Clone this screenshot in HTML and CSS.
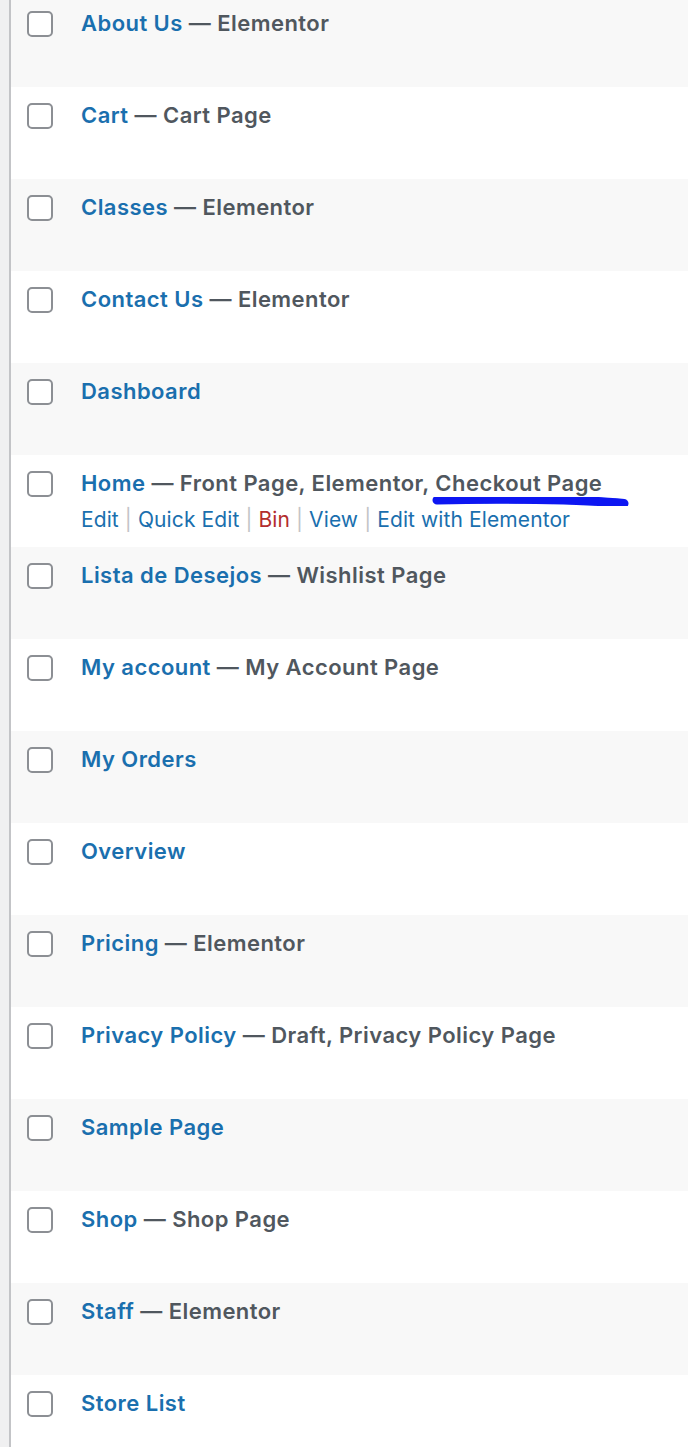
FILE: index.html
```html
<!DOCTYPE html>
<html>
<head>
<meta charset="utf-8">
<link rel="stylesheet" href="styles.css">
</head>
<body>
<div class="screen">
  <div class="gutter"></div>
  <div class="table">
    <div class="row alt"><div class="cb"><span class="box"></span></div><div class="title"><div class="line"><a class="name">About Us</a><span class="state"> — Elementor</span></div></div></div>
    <div class="row"><div class="cb"><span class="box"></span></div><div class="title"><div class="line"><a class="name">Cart</a><span class="state"> — Cart Page</span></div></div></div>
    <div class="row alt"><div class="cb"><span class="box"></span></div><div class="title"><div class="line"><a class="name">Classes</a><span class="state"> — Elementor</span></div></div></div>
    <div class="row"><div class="cb"><span class="box"></span></div><div class="title"><div class="line"><a class="name">Contact Us</a><span class="state"> — Elementor</span></div></div></div>
    <div class="row alt"><div class="cb"><span class="box"></span></div><div class="title"><div class="line"><a class="name">Dashboard</a></div></div></div>
    <div class="row"><div class="cb"><span class="box"></span></div><div class="title"><div class="line"><a class="name">Home</a><span class="state"> — Front Page, Elementor, <span class="mark">Checkout Page<svg class="scribble" width="200" height="20" viewBox="0 0 200 20"><defs><filter id="soft" x="-5%" y="-50%" width="110%" height="200%"><feGaussianBlur stdDeviation="0.7"/></filter></defs><path d="M6 8 C 40 7, 75 7, 105 7.5 S 165 8.5, 193 11.5" fill="none" stroke="#0814f2" stroke-width="9" stroke-linecap="round" filter="url(#soft)"/></svg></span></span></div>
      <div class="actions"><a>Edit</a><span class="sep">|</span><a>Quick Edit</a><span class="sep">|</span><a class="bin">Bin</a><span class="sep">|</span><a>View</a><span class="sep">|</span><a>Edit with Elementor</a></div></div></div>
    <div class="row alt"><div class="cb"><span class="box"></span></div><div class="title"><div class="line"><a class="name">Lista de Desejos</a><span class="state"> — Wishlist Page</span></div></div></div>
    <div class="row"><div class="cb"><span class="box"></span></div><div class="title"><div class="line"><a class="name">My account</a><span class="state"> — My Account Page</span></div></div></div>
    <div class="row alt"><div class="cb"><span class="box"></span></div><div class="title"><div class="line"><a class="name">My Orders</a></div></div></div>
    <div class="row"><div class="cb"><span class="box"></span></div><div class="title"><div class="line"><a class="name">Overview</a></div></div></div>
    <div class="row alt"><div class="cb"><span class="box"></span></div><div class="title"><div class="line"><a class="name">Pricing</a><span class="state"> — Elementor</span></div></div></div>
    <div class="row"><div class="cb"><span class="box"></span></div><div class="title"><div class="line"><a class="name">Privacy Policy</a><span class="state"> — Draft, Privacy Policy Page</span></div></div></div>
    <div class="row alt"><div class="cb"><span class="box"></span></div><div class="title"><div class="line"><a class="name">Sample Page</a></div></div></div>
    <div class="row"><div class="cb"><span class="box"></span></div><div class="title"><div class="line"><a class="name">Shop</a><span class="state"> — Shop Page</span></div></div></div>
    <div class="row alt"><div class="cb"><span class="box"></span></div><div class="title"><div class="line"><a class="name">Staff</a><span class="state"> — Elementor</span></div></div></div>
    <div class="row"><div class="cb"><span class="box"></span></div><div class="title"><div class="line"><a class="name">Store List</a></div></div></div>
  </div>
</div>
</body>
</html>
```
FILE: styles.css
```css
html, body {
  margin: 0;
  padding: 0;
  background: #ffffff;
}
body {
  font-family: Inter, "Noto Sans", "Liberation Sans", sans-serif;
  overflow: hidden;
}
.screen {
  display: flex;
  height: 1447px;
  overflow: hidden;
}
.gutter {
  width: 9px;
  flex: none;
  background: #f0f0f1;
  border-right: 2px solid #c3c4c7;
}
.table {
  flex: 1;
  margin-top: -5px;
}
.row {
  display: flex;
  height: 92px;
  box-sizing: border-box;
  background: #ffffff;
}
.row.alt {
  background: #f8f8f8;
}
.cb {
  width: 70px;
  flex: none;
  padding-left: 16px;
  padding-top: 16px;
  box-sizing: border-box;
}
.box {
  display: block;
  width: 26px;
  height: 26px;
  box-sizing: border-box;
  border: 2px solid #8c8f94;
  border-radius: 5px;
  background: #ffffff;
}
.title {
  padding-top: 14px;
  font-size: 22px;
  letter-spacing: 0.45px;
}
.line {
  line-height: 28px;
  font-weight: 600;
  white-space: nowrap;
}
.name {
  color: #1a6fae;
}
.state {
  color: #50575e;
}
.mark {
  position: relative;
}
.scribble {
  position: absolute;
  left: -4px;
  top: 22px;
}
.actions {
  margin-top: 9px;
  line-height: 28px;
  font-size: 21px;
  letter-spacing: 0.1px;
  font-weight: 400;
  white-space: nowrap;
}
.actions a {
  color: #1a6fae;
}
.actions a.bin {
  color: #b32d2e;
}
.sep {
  color: #c3c4c7;
  padding: 0 6px;
}
```
